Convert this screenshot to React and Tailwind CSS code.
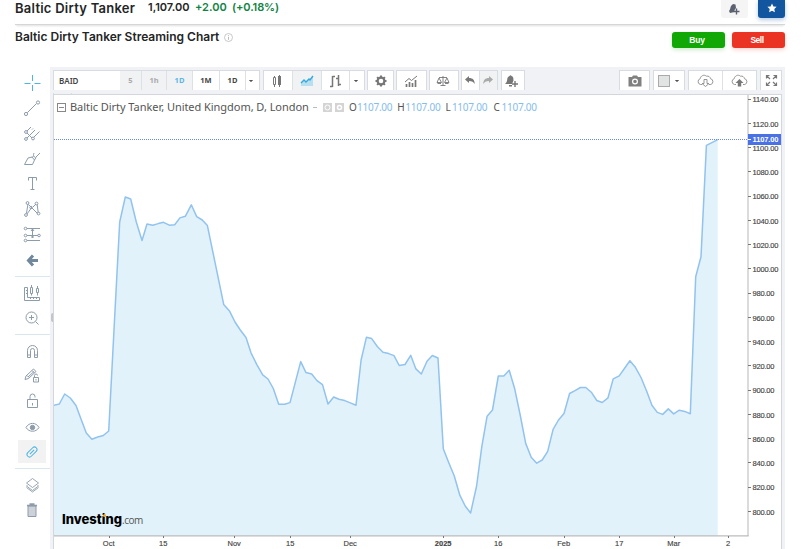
import React from 'react';
import clsx from 'clsx';

const points = [
  [53, 405.5], [59.3, 404], [64.7, 394], [70.3, 398], [76, 405.5], [81, 419], [86.3, 433], [91.9, 439.3],
  [97.7, 437], [103.3, 435.5], [108.7, 431], [114.2, 326], [119.7, 222], [125.3, 197], [130.7, 199], [136.3, 222],
  [142, 240.5], [147, 224], [152.7, 225.3], [158.3, 223.6], [163.5, 222.3], [169.3, 225.2], [174.7, 224.8],
  [179.9, 217.9], [185.3, 216.3], [191.3, 204.8], [196.7, 216.6], [202.3, 220], [207.4, 225.6], [223.7, 304.4],
  [229.7, 311.3], [235, 322], [240.3, 330], [246, 337.5], [251, 352.8], [256.7, 364.3], [262.7, 374.9], [268, 379],
  [273.3, 388.5], [278.7, 404.3], [284.7, 404.3], [290, 402.6], [295.3, 382.4], [300.7, 361.6], [306, 372.6],
  [311.7, 374], [317, 380.6], [322.5, 384.6], [328, 404], [333.7, 397], [339, 399.3], [344.7, 400.6], [350.3, 402.9],
  [356, 405.2], [361.1, 360], [366.4, 337.3], [371.7, 338.6], [377.3, 346.5], [383, 352.3], [388.7, 353.6],
  [394, 355.6], [399.2, 365.5], [405, 364.5], [410.7, 355.3], [415.9, 368.9], [421.3, 374], [427, 361.2],
  [432.3, 355.5], [438, 358], [443.3, 448.7], [448.7, 462.5], [454.3, 476], [459.8, 495.2], [465.2, 506], [470.6, 513],
  [476.6, 486], [481.8, 446.7], [487.1, 416.2], [492.5, 410], [498.3, 376], [503.8, 376], [509.2, 370.2], [514.7, 388.8],
  [520.2, 415], [525.7, 443.4], [531.2, 457.2], [536.7, 463.2], [542.2, 460], [547.7, 451.4], [553.1, 429.4],
  [558.5, 420], [564, 413.5], [569.6, 393.5], [575, 390.6], [580.4, 387.5], [585.8, 387.5], [591.3, 392.2],
  [596.8, 400.5], [602.2, 402.5], [608, 397.8], [613.2, 378.9], [619.2, 375.9], [624.6, 368.3], [629.9, 360.7],
  [635.4, 367.3], [641, 377.5], [646.4, 390.5], [651.9, 405.2], [657.3, 412.4], [662.7, 414.4], [668.3, 408.9],
  [673.7, 413.9], [679.3, 410.2], [684.7, 411.4], [690.3, 413.8], [695.7, 276.8], [701, 256.8], [706.4, 145.4],
  [711.9, 142.6], [717.7, 139.7],
];

const linePath = points.map(([x, y]) => `${x - 54},${y - 95}`).join(' ');

const prices = Array.from({ length: 18 }, (_, i) => 1140 - i * 20);

const dates = [
  { x: 109, label: 'Oct' },
  { x: 163.5, label: '15' },
  { x: 234.5, label: 'Nov' },
  { x: 290.5, label: '15' },
  { x: 350.5, label: 'Dec' },
  { x: 443.5, label: '2025', bold: true },
  { x: 498.5, label: '16' },
  { x: 564, label: 'Feb' },
  { x: 619.5, label: '17' },
  { x: 674, label: 'Mar' },
  { x: 728.5, label: '2' },
];

function Icon({ children, w = 18, h = 18, className }) {
  return (
    <svg
      width={w}
      height={h}
      viewBox={`0 0 ${w} ${h}`}
      fill="none"
      stroke="currentColor"
      strokeWidth="1"
      className={clsx('shrink-0', className)}
    >
      {children}
    </svg>
  );
}

const drawingTools = [
  <Icon key="cross" className="text-[#4db5e0]"><path d="M9.5 1v6M9.5 11v6M1.5 9.5h6M11.5 9.5h6" /></Icon>,
  <Icon key="trend"><path d="M4.3 13.7l9-9" /><circle cx="3" cy="15" r="1.6" /><circle cx="15" cy="3.5" r="1.6" /></Icon>,
  <Icon key="fork">
    <path d="M4 14l6-6M4 7l4-4M9 5.5l1-1M4 9l5 5M11 13l5.5-5.5M9 9l3-3" />
    <circle cx="3" cy="8" r="1.4" /><circle cx="3" cy="15" r="1.4" /><circle cx="10" cy="14.5" r="1.4" />
  </Icon>,
  <Icon key="brush">
    <path d="M1.5 14.5h8l2-4.5-2.5-3-4 1zM11 3c-1 2-.5 4 1.5 4.500l4.500-4.500M9 7.500l1.500-1.500M11.500 10l1.500-2.500" />
  </Icon>,
  <Icon key="text"><path d="M5.500 5.500v-3h8v3M9.500 2.500v12M7.500 14.500h4" /></Icon>,
  <Icon key="pattern">
    <path d="M3.500 13l1.500-9M5.500 4.500l9 9M4 14l4-5.500M10 7l3-3M14.200 4.500l1 8" />
    <circle cx="4.500" cy="3" r="1.400" /><circle cx="13.500" cy="3.500" r="1.400" /><circle cx="3" cy="15" r="1.400" />
    <circle cx="15.500" cy="13.500" r="1.400" /><circle cx="8" cy="7.500" r="1.200" />
  </Icon>,
  <Icon key="position">
    <path d="M4 3.500h13M4 10.500h11M4 15.500h13M9.500 4v9M8 6l1.500-2 1.500 2M8 12h3" />
    <circle cx="2.500" cy="3.500" r="1.300" /><circle cx="2.500" cy="10.500" r="1.300" /><circle cx="2.500" cy="15.500" r="1.300" />
    <circle cx="16" cy="10.500" r="1.300" />
  </Icon>,
  <Icon key="back" className="text-[#71879b]"><path d="M10 4.500L5.500 9.500l4.500 5M6 9.500h9" strokeWidth="3" /></Icon>,
];

const measureTools = [
  <Icon key="measure">
    <path d="M1.500 3.500v13h15v-3h-12v-10zM3 6.500h1M3 9.500h1M7.500 15v-1M10.500 15v-1M13.500 15v-1M7.500 3.500h2v6h-2zM8.500 1v2.500M8.500 9.500v2M13.500 4.500h2v4h-2zM14.500 2v2.500M14.500 8.500v3" />
  </Icon>,
  <Icon key="zoom"><circle cx="8.500" cy="8.500" r="5.500" /><path d="M12.500 12.500l3 3M8.500 6v5M6 8.500h5" /></Icon>,
];

const stateTools = [
  <Icon key="magnet"><path d="M4.500 15.500v-7a5 5 0 0 1 10 0v7h-3v-7a2 2 0 0 0-4 0v7zM4.500 13h3M11.500 13h3" /></Icon>,
  <Icon key="draw">
    <path d="M2 12.500l1-3.500 7.500-7 2.500 2.500-7.500 7zM4 8.500l2 2M9 3.500l2.500 2.500M5 10l6-5.500M10.500 10.500h5v4.500h-5zM11.500 10.500v-2a1.500 1.500 0 0 1 3 0M13 12v1.500" />
  </Icon>,
  <Icon key="lock"><path d="M4.500 7.500h10v8h-10zM7 7.500v-3a2.400 2.400 0 0 1 5 0v1M9.500 11v2.500" /></Icon>,
  <Icon key="eye">
    <path d="M3 9.500c3-5.500 10-5.500 13 0-3 5-10 5-13 0z" /><circle cx="9.500" cy="9.500" r="2.200" fill="currentColor" />
  </Icon>,
  <Icon key="link" className="text-[#4db5e0]">
    <g transform="rotate(-45 9 9)"><rect x="3" y="6.500" width="12" height="5" rx="2.500" /><path d="M6 9h6" /></g>
  </Icon>,
];

const bottomTools = [
  <Icon key="layers"><path d="M9.500 2.500L3.500 7l6 4.500 6-4.500zM4.500 9.500l-1 .5 6 4.500 6-4.500-1-.5M3.500 11.500l6 4.500 6-4.500" strokeWidth=".9" /></Icon>,
  <Icon key="trash">
    <path d="M5 5h8v10.500H5z" fill="#cdd2d8" /><path d="M4 4.500h10M6.500 3h5" strokeWidth="1.500" />
  </Icon>,
];

function ToolGroup({ items, rowClass, activeKey }) {
  return (
    <div className="flex flex-col pl-[3px]">
      {items.map((item) => (
        <div key={item.key} className={clsx('flex items-center', rowClass)}>
          <div
            className={clsx(
              'flex h-[23px] w-7 items-center justify-center',
              item.key === activeKey && 'bg-[#f2f2f3]'
            )}
          >
            {item}
          </div>
        </div>
      ))}
    </div>
  );
}

function Sidebar() {
  return (
    <div className="flex w-[35px] shrink-0 flex-col pt-[3px] text-[#8d9cab]">
      <div className="h-[207px] border-b border-[#d9e7ef]">
        <ToolGroup items={drawingTools} rowClass="h-[25.3px]" />
      </div>
      <div className="h-[58px] border-b border-[#d9e7ef] pt-[3px]">
        <ToolGroup items={measureTools} rowClass="h-[25px]" />
      </div>
      <div className="h-[134px] border-b border-[#d9e7ef] pt-[3px]">
        <ToolGroup items={stateTools} rowClass="h-[25.3px]" activeKey="link" />
      </div>
      <div className="pt-[3px]">
        <ToolGroup items={bottomTools} rowClass="h-[25.5px]" />
      </div>
    </div>
  );
}

function Cell({ className, children }) {
  return <div className={clsx('flex h-full items-center justify-center', className)}>{children}</div>;
}

function Group({ className, children }) {
  return (
    <div className={clsx('flex h-[20px] shrink-0 divide-x divide-[#dde0e5] border-x border-t border-[#d8dbe1] bg-white', className)}>
      {children}
    </div>
  );
}

function Caret() {
  return <Icon w={4} h={2}><path d="M0 0h4L2 2z" fill="#555" stroke="#555" strokeWidth=".3" /></Icon>;
}

function Toolbar() {
  return (
    <div className="flex h-[23px] pl-[3px] text-[#777]" style={{ fontFamily: '"Noto Sans", sans-serif' }}>
      <Group className="w-[207px] text-[7.5px] font-bold text-[#444]">
        <Cell className="w-[66px] justify-start! border-r-0! pl-[5px] text-[8px] font-semibold">BAID</Cell>
        <Cell className="w-[22px] bg-[#f0f2f4] text-[#aaa]">5</Cell>
        <Cell className="w-[25px] bg-[#f0f2f4] text-[#aaa]">1h</Cell>
        <Cell className="w-[26px] bg-[#f0f2f4] text-[#5bb5e6]">1D</Cell>
        <Cell className="w-[27px]">1M</Cell>
        <Cell className="w-[26px]">1D</Cell>
        <Cell className="flex-1 pr-[3px]"><Caret /></Cell>
      </Group>
      <Group className="ml-[3px] w-[102px]">
        <Cell className="w-[29px] pr-[2px]">
          <Icon w={10} h={14}><path d="M1.500 3.500h2v7h-2zM2.500 2v1.500M2.500 10.500V13M7.500 1v12" /><path d="M6 2h3v9H6z" fill="currentColor" stroke="none" /></Icon>
        </Cell>
        <Cell className="w-[29px] bg-[#f0f2f4]">
          <Icon w={14} h={12}><path d="M1 8l3-3 2 2 3-3 1 1 3-4v10H1z" fill="#b8dff0" stroke="none" /><path d="M1 8l3-3 2 2 3-3 1 1 3-4" stroke="#35a9dc" strokeWidth="1.400" /></Icon>
        </Cell>
        <Cell className="w-[28px] pr-[2px]">
          <Icon w={12} h={14}><path d="M3.500 2v11M1 12.500h2.500M3.500 2.500H6M9.500 1v11M7 4.500h2.500M9.500 10.500H12" strokeWidth="1.500" /></Icon>
        </Cell>
        <Cell className="flex-1 pr-[3px]"><Caret /></Cell>
      </Group>
      <Group className="ml-[2px] w-[27px]">
        <Cell className="w-full">
          <Icon w={14} h={14}><circle cx="7" cy="7" r="3.400" strokeWidth="2.200" /><path d="M7 1.500v2M7 10.500v2M1.500 7h2M10.500 7h2M3.100 3.100l1.400 1.400M9.500 9.500l1.400 1.400M3.100 10.900l1.400-1.400M9.500 4.500l1.400-1.400" strokeWidth="2" /></Icon>
        </Cell>
      </Group>
      <Group className="ml-[2px] w-[31px]">
        <Cell className="w-full pr-[2px]">
          <Icon w={12} h={12}><path d="M1.500 9v3M4.500 7v5M7.500 8v4M10.500 5v7" strokeWidth="1.700" /><path d="M0 7l4-3.500L6.500 5.500 12 1" /></Icon>
        </Cell>
      </Group>
      <Group className="ml-[2px] w-[30px]">
        <Cell className="w-full pr-[3px]">
          <Icon w={14} h={12}><path d="M3 2.500h8M7 1v9.500M4.500 10.500h5M3 3L1 7.500h4.500zM11 3L8.500 7.500H13zM1.500 8.500h3.500M9 8.500h3.500" strokeWidth=".9" /></Icon>
        </Cell>
      </Group>
      <Group className="ml-[2px] w-[37px]">
        <Cell className="w-[18px] pr-[2px]">
          <Icon w={10} h={9}><path d="M0 3.500L4 0v2c4 0 5.500 2 5.800 6C8.500 6 7 5 4 5v2z" fill="#777" stroke="none" /></Icon>
        </Cell>
        <Cell className="flex-1 bg-[#f0f2f4] pr-[2px]">
          <Icon w={10} h={9}><path d="M10 3.500L6 0v2C2 2 .5 4 .2 8 1.500 6 3 5 6 5v2z" fill="#aaa" stroke="none" /></Icon>
        </Cell>
      </Group>
      <Group className="ml-[3px] w-[24px]">
        <Cell className="w-full pr-[4px]">
          <Icon w={13} h={12}><path d="M0 9C2 7 2 6 2.300 4 2.500 2 3.500 1.500 4.500 1c.5-1 1.500-1 2 0C8 1.500 8.500 2.500 8.500 5.500L7 9zM4 10h3v1.500H4z" fill="currentColor" stroke="none" /><path d="M10 6v6M7 9h6" strokeWidth="1.400" /></Icon>
        </Cell>
      </Group>
      <Group className="mr-[3px] ml-auto w-[31px]">
        <Cell className="w-full">
          <Icon w={14} h={12}><path d="M1 2h3l1-1.500h4L10 2h3.500v9.500H.5V2z" fill="#808080" stroke="none" /><circle cx="7" cy="6.500" r="2.400" stroke="#fff" strokeWidth="1.200" /></Icon>
        </Cell>
      </Group>
      <Group className="mr-[3px] w-[32px]">
        <Cell className="w-full justify-between! pr-[5px] pl-1">
          <div className="h-3 w-3 border border-[#aaa] bg-[#e2e3e3]" />
          <Caret />
        </Cell>
      </Group>
      <Group className="mr-[3px] w-[69px]">
        {['down', 'up'].map((dir) => (
          <Cell key={dir} className="flex-1">
            <Icon w={17} h={13} className="text-[#8a8a8a]">
              <path d="M5 10.500H3.500a3 3 0 0 1-.3-5.800C3.500 2 7 0 9.500 2.200c2-.5 3.600.6 4 2.500a3 3 0 0 1 .3 5.800H12" strokeWidth=".9" />
              {dir === 'down' ? (
                <path d="M7 5.500h3v4h2L8.500 12.500 5 9.500h2z" strokeWidth=".9" />
              ) : (
                <path d="M8.500 5l4 4h-2.300v3.500H6.800V9H4.500z" fill="#777" stroke="none" />
              )}
            </Icon>
          </Cell>
        ))}
      </Group>
      <Group className="mr-[3px] w-[22px]">
        <Cell className="w-full">
          <Icon w={13} h={13}><path d="M1.500 4.500v-3h3M1.500 1.500L5 5M8.500 1.500h3v3M11.500 1.500L8 5M1.500 8.500v3h3M1.500 11.500L5 8M8.500 11.500h3v-3M11.500 11.500L8 8" strokeWidth="1.200" /></Icon>
        </Cell>
      </Group>
    </div>
  );
}

function Legend() {
  return (
    <div
      className="absolute top-[4px] left-[3px] flex h-4 items-center text-[11px] whitespace-nowrap text-[#555]"
      style={{ fontFamily: '"Noto Sans", sans-serif' }}
    >
      <Icon w={9} h={9}><rect x=".5" y=".5" width="8" height="8" stroke="#888" /><path d="M2 4.500h5" stroke="#888" /></Icon>
      <span className="ml-1 w-[240px] tracking-[-0.045px]">Baltic Dirty Tanker, United Kingdom, D, London</span>
      <span className="ml-[3px] h-px w-1 bg-[#bbb]" />
      <Icon w={9} h={9} className="ml-[6px]"><path d="M0 0h9v9H0z" fill="#d4d4d4" stroke="none" /><circle cx="4.500" cy="4.500" r="2.500" stroke="#fff" /></Icon>
      <Icon w={9} h={9} className="ml-[3px]"><path d="M0 0h9v9H0z" fill="#d4d4d4" stroke="none" /><circle cx="4.500" cy="4.500" r="2" stroke="#fff" strokeWidth="1.500" /></Icon>
      <div className="ml-[5px] flex text-[10px]">
        {['O', 'H', 'L', 'C'].map((k) => (
          <span key={k} className="flex w-[48.2px]">
            <span className={k === 'L' ? 'w-[6.5px]' : 'w-[8px]'}>{k}</span>
            <span className="tracking-[-0.25px] text-[#85bdec]">1107.00</span>
          </span>
        ))}
      </div>
    </div>
  );
}

function Chart() {
  return (
    <div className="relative ml-[3px] h-[456px] w-[729px] border-t border-r border-l border-[#d3d6dc] bg-white">
      <svg width="727" height="455" viewBox="0 0 727 455" fontFamily='"Liberation Sans", Arial, sans-serif' fontSize="7.5" className="block">
        <polygon points={`-1,441 ${linePath} 663.7,441`} fill="#e1f2fa" />
        <polyline points={linePath} fill="none" stroke="#92c3ee" strokeWidth="1.5" strokeLinejoin="round" />
        <path d="M0 44.500h694" stroke="#6c88e0" strokeDasharray="1 1" />
        <path d="M694 0v441" stroke="#cfcfcf" strokeWidth="1.500" />
        <path d="M0 440.900h694.700" stroke="#bcbcbc" strokeWidth="1.200" />
        {prices.map((p, i) => {
          const y = 4.7 + i * 24.25;
          return (
            <g key={p}>
              <path d={`M694 ${Math.round(y) - 0.5}h3`} stroke="#777" />
              <text x="698.5" y={y + 2.7} fill="#444" stroke="#444" strokeWidth=".15" textLength={p >= 1000 ? 26 : 22}>
                {p}.00
              </text>
            </g>
          );
        })}
        <path d="M694 39h33v11h-33z" fill="#4a72e4" />
        <path d="M694 44.500h3" stroke="#fff" />
        <text x="698.5" y="47.400" fill="#fff" fontWeight="bold" textLength="26">1107.00</text>
        {dates.map((d) => (
          <g key={d.x}>
            <path d={`M${Math.floor(d.x) - 53.5} 441v2`} stroke="#777" />
            <text x={d.x - 54.3} y="451" textAnchor="middle" fill="#444" stroke="#444" strokeWidth=".15" fontWeight={d.bold ? 'bold' : 'normal'}>
              {d.label}
            </text>
          </g>
        ))}
      </svg>
      <Legend />
      <div className="absolute top-[418px] left-[8px] flex items-baseline leading-none" style={{ fontFamily: 'Inter, sans-serif' }}>
        <span className="relative w-[60px] text-[13px] font-extrabold text-black">
          Investing
          <span className="absolute top-[1px] left-[41px] h-[3px] w-[3px] rounded-full bg-[#f5a524]" />
        </span>
        <span className="text-[10px] tracking-[-0.5px] text-[#555]" style={{ fontFamily: '"Open Sans", sans-serif' }}>.com</span>
      </div>
    </div>
  );
}

export default function App() {
  return (
    <div className="h-[549px] w-[808px] overflow-hidden bg-white pl-[15px] text-[#232526]" style={{ fontFamily: 'Inter, sans-serif' }}>
      {/* Quote header */}
      <div className="flex h-[25px] w-[770px] items-start border-b border-[#d6d6d6] shadow-[0_2px_2px_-1px_rgba(0,0,0,0.12)]">
        <h1 className="w-[133px] text-[13px] leading-4 font-semibold tracking-[0.25px] whitespace-nowrap">Baltic Dirty Tanker</h1>
        <span className="w-[47px] text-[11px] leading-[15px] font-semibold">1,107.00</span>
        <span className="w-[37px] text-[11px] leading-[15px] font-semibold text-[#0f8442]">+2.00</span>
        <span className="text-[11px] leading-[15px] font-semibold tracking-[-0.1px] text-[#0f8442]">(+0.18%)</span>
        <div className="ml-auto flex gap-[10px]">
          <div className="flex h-[18px] w-[27px] items-center justify-center rounded-b-[3px] bg-[#f5f5f5] pr-[2px] text-[#5b616e]">
            <Icon w={12} h={12}><path d="M1 8c1.500-1.500 1-3 2-5l2-2 2.500.5L8 5 6.500 7v2L2 10z" fill="currentColor" stroke="none" /><path d="M8.500 5.500v6M5.500 8.500h6" strokeWidth="1.400" /></Icon>
          </div>
          <div className="flex h-[18px] w-[27px] items-center justify-center rounded-b-[3px] bg-[#1256a0] pb-[2px] shadow-[0_2px_4px_rgba(18,86,160,0.3)]">
            <Icon w={10} h={10}><path d="M5 .5l1.400 2.900 3.200.4-2.300 2.200.6 3.200L5 7.700 2.100 9.200l.6-3.200L.4 3.800l3.200-.4z" fill="#fff" stroke="none" /></Icon>
          </div>
        </div>
      </div>

      {/* Chart title */}
      <div className="flex h-[42px] w-[770px] items-start pt-[7px]">
        <h2 className="mt-[-1px] text-[12px] leading-[11px] font-semibold whitespace-nowrap">Baltic Dirty Tanker Streaming Chart</h2>
        <Icon w={9} h={9} className="mt-[1px] ml-[5px]"><circle cx="4.500" cy="4.500" r="4" stroke="#bbb" strokeWidth=".8" /><path d="M4.500 4v2.800M4.500 2.200v1" stroke="#aaa" strokeWidth=".8" /></Icon>
        <div className="ml-auto flex gap-[7px] text-[8.5px] font-bold text-white" style={{ fontFamily: '"Liberation Sans", Arial, sans-serif' }}>
          <button className="h-4 w-[53px] rounded-[3px] bg-[#11a704] pr-[3px] leading-none tracking-[-0.2px] shadow-[0_2px_4px_rgba(17,167,4,0.2)]">Buy</button>
          <button className="h-4 w-[53px] rounded-[3px] bg-[#ea3323] pr-[3px] leading-none tracking-[-0.5px] shadow-[0_2px_4px_rgba(234,51,35,0.2)]">Sell</button>
        </div>
      </div>

      <div className="flex">
        <Sidebar />
        <div className="relative h-[482px] w-[735px] bg-[#f0f2f6] pt-[3px]">
          <Toolbar />
          <div className="ml-[3px] flex h-1 w-[19px] items-center justify-center border-r border-l border-[#d8dbe1]">
            <Icon w={4} h={2}><path d="M0 2h4L2 0z" fill="#bbb" stroke="none" /></Icon>
          </div>
          <div className="mt-[-3px]">
            <Chart />
          </div>
          <div className="absolute top-[246px] left-[1px] h-[9px] w-[2px] rounded-l bg-[#c2c5c9]" />
        </div>
      </div>
    </div>
  );
}
